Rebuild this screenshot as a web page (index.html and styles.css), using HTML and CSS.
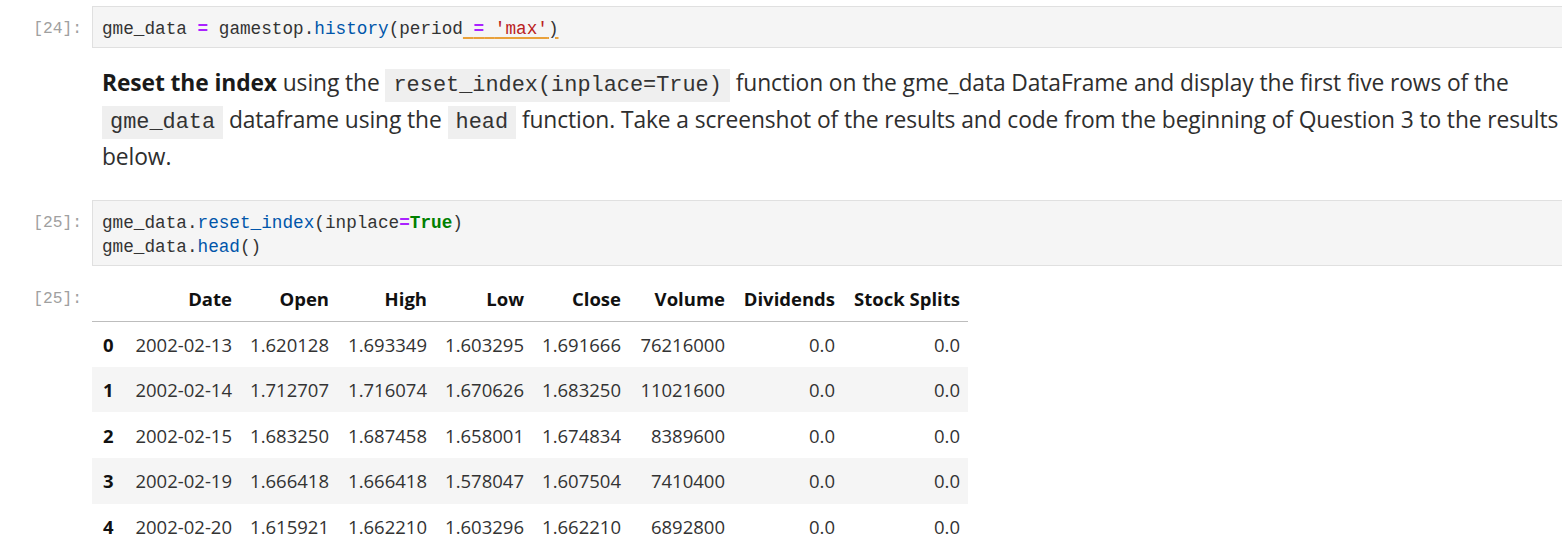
FILE: index.html
```html
<!DOCTYPE html>
<html>
<head>
<meta charset="utf-8">
<link rel="stylesheet" href="styles.css">
</head>
<body>
<div class="notebook">
  <div class="cell">
    <div class="prompt">[24]:</div>
    <div class="code-box">
      <pre class="code">gme_data <span class="op">=</span> gamestop.<span class="attr">history</span>(period<span class="warn"> <span class="op">=</span> <span class="str">'max'</span>)</span></pre>
    </div>
  </div>

  <div class="cell md-cell">
    <div class="prompt"></div>
    <p class="md">
      <strong>Reset the index</strong> using the <code class="ic">reset_index(inplace=True)</code> function on the gme_data DataFrame and display the first five rows of the <code class="ic">gme_data</code> dataframe using the <code class="ic">head</code> function. Take a screenshot of the results and code from the beginning of Question 3 to the results below.
    </p>
  </div>

  <div class="cell">
    <div class="prompt">[25]:</div>
    <div class="code-box">
      <pre class="code">gme_data.<span class="attr">reset_index</span>(inplace<span class="op">=</span><span class="kw">True</span>)
gme_data.<span class="attr">head</span>()</pre>
    </div>
  </div>

  <div class="cell out-cell">
    <div class="prompt out-prompt">[25]:</div>
    <table class="df">
      <colgroup>
        <col class="c-idx"><col class="c-date"><col class="c-num"><col class="c-num2"><col class="c-num"><col class="c-num"><col class="c-vol"><col class="c-div"><col class="c-split">
      </colgroup>
      <thead>
        <tr><th></th><th>Date</th><th>Open</th><th>High</th><th>Low</th><th>Close</th><th>Volume</th><th>Dividends</th><th>Stock Splits</th></tr>
      </thead>
      <tbody>
        <tr><th>0</th><td>2002-02-13</td><td>1.620128</td><td>1.693349</td><td>1.603295</td><td>1.691666</td><td>76216000</td><td>0.0</td><td>0.0</td></tr>
        <tr><th>1</th><td>2002-02-14</td><td>1.712707</td><td>1.716074</td><td>1.670626</td><td>1.683250</td><td>11021600</td><td>0.0</td><td>0.0</td></tr>
        <tr><th>2</th><td>2002-02-15</td><td>1.683250</td><td>1.687458</td><td>1.658001</td><td>1.674834</td><td>8389600</td><td>0.0</td><td>0.0</td></tr>
        <tr><th>3</th><td>2002-02-19</td><td>1.666418</td><td>1.666418</td><td>1.578047</td><td>1.607504</td><td>7410400</td><td>0.0</td><td>0.0</td></tr>
        <tr><th>4</th><td>2002-02-20</td><td>1.615921</td><td>1.662210</td><td>1.603296</td><td>1.662210</td><td>6892800</td><td>0.0</td><td>0.0</td></tr>
      </tbody>
    </table>
  </div>
</div>
</body>
</html>
```

FILE: styles.css
```css
html, body {
  margin: 0;
  padding: 0;
  background: #ffffff;
  overflow: hidden;
}

.notebook {
  padding-top: 6px;
  width: 1600px;
}

.cell {
  display: flex;
  align-items: flex-start;
}

.prompt {
  flex: 0 0 92px;
  box-sizing: border-box;
  padding-right: 10px;
  padding-top: 11px;
  text-align: right;
  font-family: "Liberation Mono", monospace;
  font-size: 16.3px;
  line-height: 24px;
  color: #a0a0a0;
}

.code-box {
  flex: 1 1 auto;
  background: #f5f5f5;
  border: 1px solid #e0e0e0;
  padding: 10px 9px 6px;
}

.code {
  margin: 0;
  font-family: "Liberation Mono", monospace;
  font-size: 17.7px;
  line-height: 24px;
  color: #333333;
}

.op { color: #aa22ff; font-weight: bold; }
.attr { color: #0055aa; }
.str { color: #ba2121; }
.kw { color: #008000; font-weight: bold; }
.warn {
  text-decoration: underline;
  text-decoration-color: #e9a13b;
  text-decoration-thickness: 2px;
  text-underline-offset: 3px;
}

.md-cell {
  margin-top: 16px;
}

.md {
  margin: 0;
  width: 1485px;
  padding-left: 10px;
  font-family: "Open Sans", sans-serif;
  font-size: 22.8px;
  line-height: 37px;
  color: #2e2e2e;
  letter-spacing: -0.1px;
}

.md strong {
  color: #1a1a1a;
  font-weight: 700;
}

.ic {
  font-family: "Liberation Mono", monospace;
  font-size: 21.9px;
  line-height: 1;
  background: #efefef;
  padding: 4px 8px;
  color: #333333;
  letter-spacing: 0;
}

.md-cell + .cell {
  margin-top: 25px;
}

.out-cell {
  margin-top: 11px;
}

.out-prompt {
  padding-top: 10px;
}

.df {
  border-collapse: collapse;
  table-layout: fixed;
  width: 876px;
  font-family: "Open Sans", sans-serif;
  font-size: 18.5px;
  color: #333333;
}

.c-idx { width: 27px; }
.c-date { width: 121px; }
.c-num { width: 97px; }
.c-num2 { width: 98px; }
.c-vol { width: 104px; }
.c-div { width: 110px; }
.c-split { width: 125px; }

.df th, .df td {
  text-align: right;
  padding: 0 8px 0 0;
  white-space: nowrap;
}

.df thead tr {
  height: 44px;
  border-bottom: 1px solid #bdbdbd;
}

.df thead th {
  font-weight: 700;
  color: #111111;
}

.df tbody tr {
  height: 45.7px;
}

.df tbody tr:nth-child(even) {
  background: #f5f5f5;
}

.df tbody th {
  font-weight: 700;
  color: #111111;
  text-align: left;
  padding-left: 11px;
}
```
